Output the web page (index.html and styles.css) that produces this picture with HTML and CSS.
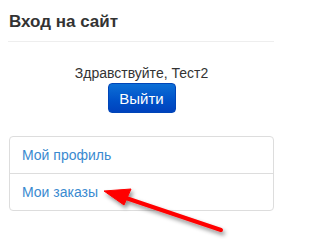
FILE: index.html
```html
<!DOCTYPE html>
<html lang="ru">
<head>
<meta charset="utf-8">
<link rel="stylesheet" href="styles.css">
</head>
<body>
<div class="widget">
  <h3 class="title">Вход на сайт</h3>
  <div class="greet">
    <div class="hello">Здравствуйте, Тест2</div>
    <button class="btn">Выйти</button>
  </div>
  <ul class="menu">
    <li class="item"><a href="#">Мой профиль</a></li>
    <li class="item"><a href="#">Мои заказы</a></li>
  </ul>
</div>
<svg class="arrow" width="286" height="240" viewBox="0 0 286 240">
  <defs>
    <filter id="sh" x="-20%" y="-20%" width="140%" height="140%">
      <feDropShadow dx="2" dy="3" stdDeviation="2" flood-color="#000" flood-opacity="0.45"/>
    </filter>
  </defs>
  <g filter="url(#sh)" fill="#f00" stroke="#f00">
    <line x1="221" y1="230" x2="120" y2="196" stroke-width="4" stroke-linecap="round"/>
    <polygon points="104,191 131,189 124,205" stroke-width="1" stroke-linejoin="round"/>
  </g>
</svg>
</body>
</html>
```
FILE: styles.css
```css
html, body {
  margin: 0;
  padding: 0;
  background: #fff;
}
body {
  width: 286px;
  height: 240px;
  overflow: hidden;
  font-family: "Liberation Sans", Arial, sans-serif;
  position: relative;
}
.widget {
  padding: 0 12px 0 8px;
}
.title {
  margin: 0;
  padding: 13px 0 11px 1px;
  font-size: 17px;
  line-height: 17px;
  font-weight: bold;
  color: #333;
  border-bottom: 1px solid #eee;
}
.greet {
  display: flex;
  flex-direction: column;
  align-items: center;
  padding-top: 23px;
}
.hello {
  font-size: 14px;
  line-height: 16px;
  color: #333;
  margin-left: 1px;
}
.btn {
  margin-top: 2px;
  width: 68px;
  height: 30px;
  border: 1px solid #0045b8;
  border-radius: 4px;
  background: linear-gradient(to bottom, #0c6fd6 0%, #0051c8 60%, #0042bd 100%);
  color: #fff;
  font-family: "Liberation Sans", Arial, sans-serif;
  font-size: 15px;
  padding: 0;
  margin-left: 1px;
}
.menu {
  list-style: none;
  margin: 23px 0 0 1px;
  padding: 0;
  border: 1px solid #ddd;
  border-radius: 4px;
}
.item {
  height: 36px;
  display: flex;
  align-items: center;
  padding-left: 12px;
  font-size: 14px;
}
.item + .item {
  border-top: 1px solid #ddd;
}
.item a {
  color: #3a8ad0;
  text-decoration: none;
}
.arrow {
  position: absolute;
  left: 0;
  top: 0;
  pointer-events: none;
}
```
